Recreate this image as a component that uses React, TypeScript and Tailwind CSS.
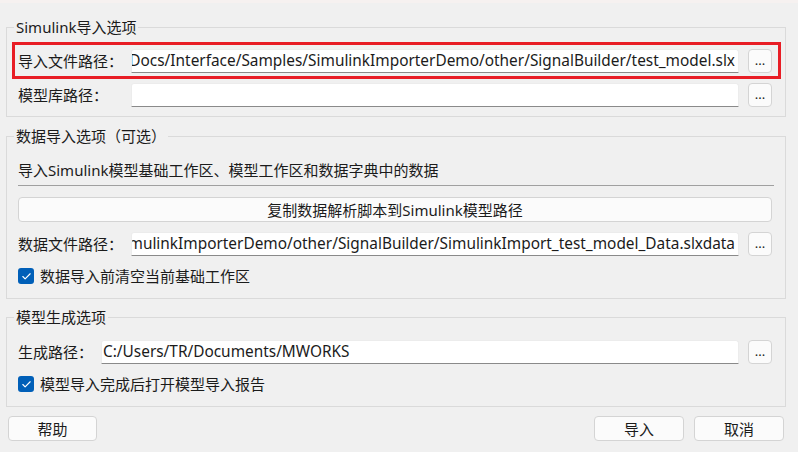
import { Check } from 'lucide-react';

const font = { fontFamily: '"Noto Sans", "Noto Sans CJK SC", sans-serif' };

function PathInput({ value, scrolled }: { value: string; scrolled?: boolean }) {
    return (
        <div
            className={`flex h-[24px] min-w-0 flex-1 items-center overflow-hidden rounded-t-[3px] border border-[#ececec] border-b-[#8a8a8a] bg-white ${
                scrolled ? 'justify-end pr-[3px]' : 'justify-start pl-[1px]'
            }`}
        >
            <span className="shrink-0 text-[15.4px] whitespace-nowrap text-[#1b1b1b]">{value}</span>
        </div>
    );
}

function DotsButton() {
    return (
        <button className="ml-[9px] flex h-[24px] w-[24px] shrink-0 items-center justify-center rounded-[4px] border border-[#d4d4d4] bg-[#fbfbfb] pb-[2px] text-[13px] leading-none text-[#1b1b1b]">
            ...
        </button>
    );
}

function PathRow({ label, value, labelWidth, scrolled }: { label: string; value: string; labelWidth: string; scrolled?: boolean }) {
    return (
        <div className="flex min-w-0 items-center">
            <span className={`${labelWidth} shrink-0 whitespace-nowrap text-[#1b1b1b]`}>{label}</span>
            <PathInput value={value} scrolled={scrolled} />
            <DotsButton />
        </div>
    );
}

function CheckRow({ label }: { label: string }) {
    return (
        <div className="flex items-center gap-[6px]">
            <span className="flex h-[16px] w-[16px] items-center justify-center rounded-[3px] bg-[#005fb8]">
                <Check className="h-[11px] w-[11px] text-white" strokeWidth={2.5} />
            </span>
            <span className="text-[#1b1b1b]">{label}</span>
        </div>
    );
}

function Group({ title, className, children }: { title: string; className: string; children: React.ReactNode }) {
    return (
        <fieldset className={`mr-[12px] ml-[6px] min-w-0 border border-[#dadada] pr-[13px] pl-[11px] ${className}`}>
            <legend className="-ml-[4px] px-[2px] text-[#1b1b1b]">{title}</legend>
            {children}
        </fieldset>
    );
}

export default function App() {
    return (
        <div className="flex h-[452px] w-[798px] flex-col overflow-hidden bg-[#f0f0f0] text-[15px] leading-[20px]" style={font}>
            <div className="h-[3px] bg-[#f6f1f0]" />

            <Group title="Simulink导入选项" className="mt-[14px] pt-[12px] pb-[9px]">
                <div className="flex flex-col gap-[10px]">
                    <div className="relative">
                        <PathRow
                            label="导入文件路径："
                            labelWidth="w-[113px]"
                            scrolled
                            value="C:/Users/TR/Documents/MWORKS/Docs/Interface/Samples/SimulinkImporterDemo/other/SignalBuilder/test_model.slx"
                        />
                        <span className="pointer-events-none absolute -top-[7px] -right-[9px] -bottom-[6px] -left-[6px] border-[3px] border-[#e81d25]" />
                    </div>
                    <PathRow label="模型库路径：" labelWidth="w-[113px]" value="" />
                </div>
            </Group>

            <Group title="数据导入选项（可选）" className="mt-[9px] pt-[14px] pb-[12px]">
                <div className="text-[#1b1b1b]">导入Simulink模型基础工作区、模型工作区和数据字典中的数据</div>
                <div className="mt-[5px] mr-[-2px] h-px bg-[#a0a0a0]" />
                <button className="mt-[11px] flex h-[25px] w-full items-center justify-center rounded-[4px] border border-[#d4d4d4] bg-[#fbfbfb] text-[#1b1b1b]">
                    复制数据解析脚本到Simulink模型路径
                </button>
                <div className="mt-[10px]">
                    <PathRow
                        label="数据文件路径："
                        labelWidth="w-[113px]"
                        scrolled
                        value="C:/Users/TR/Documents/MWORKS/Docs/Interface/Samples/SimulinkImporterDemo/other/SignalBuilder/SimulinkImport_test_model_Data.slxdata"
                    />
                </div>
                <div className="mt-[10px]">
                    <CheckRow label="数据导入前清空当前基础工作区" />
                </div>
            </Group>

            <Group title="模型生成选项" className="mt-[8px] pt-[13px] pb-[12px]">
                <PathRow label="生成路径：" labelWidth="w-[83px]" value="C:/Users/TR/Documents/MWORKS" />
                <div className="mt-[10px]">
                    <CheckRow label="模型导入完成后打开模型导入报告" />
                </div>
            </Group>

            <div className="mt-[9px] mr-[14px] ml-[8px] flex items-center">
                <button className="h-[25px] w-[89px] rounded-[4px] border border-[#d4d4d4] bg-[#fbfbfb] text-[#1b1b1b]">帮助</button>
                <div className="flex-1" />
                <div className="flex gap-[10px]">
                    <button className="h-[25px] w-[90px] rounded-[4px] border border-[#d4d4d4] bg-[#fbfbfb] text-[#1b1b1b]">导入</button>
                    <button className="h-[25px] w-[90px] rounded-[4px] border border-[#d4d4d4] bg-[#fbfbfb] text-[#1b1b1b]">取消</button>
                </div>
            </div>
        </div>
    );
}
